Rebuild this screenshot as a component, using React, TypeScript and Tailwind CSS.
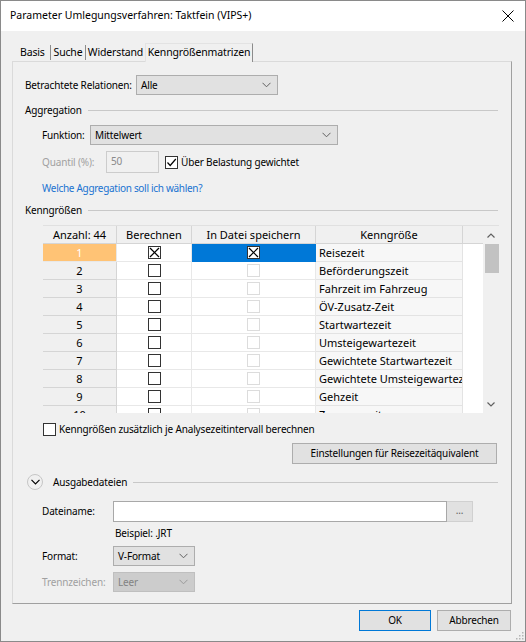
const font = { fontFamily: '"Noto Sans", "Liberation Sans", sans-serif' };

function Chevron({ color = "#606060" }: { color?: string }) {
  return (
    <svg width="9" height="6" viewBox="0 0 9 6">
      <polyline points="0.5,0.8 4.5,4.8 8.5,0.8" fill="none" stroke={color} strokeWidth="1" />
    </svg>
  );
}

function Select({ value, w, disabled }: { value: string; w: string; disabled?: boolean }) {
  return (
    <div
      className={`${w} h-[20px] shrink-0 flex items-center justify-between pl-[4px] pr-[6px] border ${
        disabled ? "bg-[#cccccc] border-[#bfbfbf] text-[#838383]" : "bg-[#e1e1e1] border-[#adadad] text-black"
      }`}
    >
      <span>{value}</span>
      <Chevron color={disabled ? "#9a9a9a" : "#606060"} />
    </div>
  );
}

function Box({ checked, disabled, tick }: { checked?: boolean; disabled?: boolean; tick?: boolean }) {
  return (
    <div
      className={`w-[13px] h-[13px] shrink-0 border bg-white flex items-center justify-center ${
        disabled ? "border-[#dcdcdc]" : "border-[#333333]"
      }`}
    >
      {checked && (
        <svg width="11" height="11" viewBox="0 0 11 11">
          <line x1="1" y1="1" x2="10" y2="10" stroke="#000" strokeWidth="1.2" />
          <line x1="10" y1="1" x2="1" y2="10" stroke="#000" strokeWidth="1.2" />
        </svg>
      )}
      {tick && (
        <svg width="11" height="11" viewBox="0 0 11 11">
          <polyline points="1.5,5.5 4.2,8.5 9.8,2" fill="none" stroke="#000" strokeWidth="1.2" />
        </svg>
      )}
    </div>
  );
}

function Group({ label }: { label: string }) {
  return (
    <div className="flex items-center h-[14px]">
      <span className="pr-[6px] whitespace-nowrap">{label}</span>
      <div className="flex-1 h-px bg-[#c8c8c8]" />
    </div>
  );
}

const rows = [
  "Reisezeit",
  "Beförderungszeit",
  "Fahrzeit im Fahrzeug",
  "ÖV-Zusatz-Zeit",
  "Startwartezeit",
  "Umsteigewartezeit",
  "Gewichtete Startwartezeit",
  "Gewichtete Umsteigewartezeit",
  "Gehzeit",
  "Zugangszeit",
];

function Table() {
  const cols = "grid grid-cols-[74px_75px_124px_147px_20px]";
  return (
    <div className="ml-[30px] mt-[8px] w-[456px] h-[188px] flex border-t border-[#e0e0e0] bg-white text-[11px] tracking-normal">
      <div className="w-[440px] flex flex-col">
        <div className={`${cols} h-[18px] bg-[#f0f0f0] text-center`}>
          <div className="border-r border-b border-[#d5d5d5] leading-[17px]">Anzahl: 44</div>
          <div className="border-r border-b border-[#d5d5d5] leading-[17px]">Berechnen</div>
          <div className="border-r border-b border-[#d5d5d5] leading-[17px]">In Datei speichern</div>
          <div className="border-r border-b border-[#d5d5d5] leading-[17px]">Kenngröße</div>
          <div className="border-b border-[#d5d5d5]" />
        </div>
        <div className="h-[170px] overflow-hidden">
          {rows.map((r, i) => (
            <div key={r} className={`${cols} h-[18px]`}>
              <div
                className={`border-r border-b leading-[17px] text-center ${
                  i === 0 ? "bg-[#ffc375] text-white border-[#e8e8e8]" : "bg-[#f0f0f0] border-[#d5d5d5]"
                }`}
              >
                {i + 1}
              </div>
              <div className="border-r border-b border-[#e8e8e8] flex items-center justify-center">
                <Box checked={i === 0} />
              </div>
              <div
                className={`border-r border-b flex items-center justify-center ${
                  i === 0 ? "bg-[#0078d7] border-[#0078d7]" : "border-[#e8e8e8]"
                }`}
              >
                <Box checked={i === 0} disabled={i !== 0} />
              </div>
              <div className="border-r border-b border-[#e3e3e3] bg-[#f7f7f7] pl-[3px] leading-[17px] whitespace-nowrap overflow-hidden">
                {r}
              </div>
              <div />
            </div>
          ))}
        </div>
      </div>
      <div className="w-[16px] bg-[#f0f0f0] flex flex-col items-center">
        <div className="h-[18px] flex items-center justify-center">
          <svg width="8" height="5" viewBox="0 0 8 5">
            <polyline points="0.5,4.5 4,1 7.5,4.5" fill="none" stroke="#606060" strokeWidth="1.2" />
          </svg>
        </div>
        <div className="w-[14px] h-[29px] bg-[#c2c2c2] ml-px" />
        <div className="flex-1" />
        <div className="h-[18px] flex items-center justify-center">
          <svg width="8" height="5" viewBox="0 0 8 5">
            <polyline points="0.5,0.5 4,4 7.5,0.5" fill="none" stroke="#606060" strokeWidth="1.2" />
          </svg>
        </div>
      </div>
    </div>
  );
}

export default function App() {
  return (
    <div
      style={font}
      className="w-[526px] h-[642px] border border-[#8a8a8a] bg-[#f0f0f0] text-[10px] tracking-[-0.15px] text-black flex flex-col overflow-hidden whitespace-nowrap"
    >
      <div className="h-[30px] bg-white flex items-center justify-between pl-[9px] pr-[11px] shrink-0">
        <span className="text-[10.5px] tracking-normal">Parameter Umlegungsverfahren: Taktfein (VIPS+)</span>
        <svg width="12" height="12" viewBox="0 0 12 12">
          <line x1="0.5" y1="0.5" x2="11.5" y2="11.5" stroke="#000" strokeWidth="1" />
          <line x1="11.5" y1="0.5" x2="0.5" y2="11.5" stroke="#000" strokeWidth="1" />
        </svg>
      </div>

      <div className="ml-[11px] mt-[11px] flex items-end h-[19px] shrink-0 text-[10.5px]">
        <div className="w-[38px] pl-[8px] leading-[17px]">Basis</div>
        <div className="w-px h-[15px] bg-[#8c8c8c] mb-[1px]" />
        <div className="w-[34px] leading-[17px] text-center">Suche</div>
        <div className="w-px h-[15px] bg-[#8c8c8c] mb-[1px]" />
        <div className="w-[59px] leading-[17px] text-center">Widerstand</div>
        <div className="w-[108px] h-[19px] border-l border-r border-t border-l-[#e3e3e3] border-t-[#e3e3e3] border-r-[#8c8c8c] leading-[17px] text-center bg-[#f0f0f0] relative top-px">
          Kenngrößenmatrizen
        </div>
      </div>

      <div className="ml-[11px] w-[500px] h-[543px] border border-l-[#dadada] border-t-[#dadada] border-r-[#a0a0a0] border-b-[#a0a0a0] flex flex-col shrink-0">
        <div className="mt-[13px] pl-[12px] flex items-center h-[20px]">
          <span className="w-[111px] shrink-0">Betrachtete Relationen:</span>
          <Select value="Alle" w="w-[142px]" />
        </div>

        <div className="mt-[8px] pl-[12px] pr-[13px]">
          <Group label="Aggregation" />
        </div>

        <div className="mt-[8px] pl-[29px] flex items-center h-[20px]">
          <span className="w-[48px] shrink-0">Funktion:</span>
          <Select value="Mittelwert" w="w-[248px]" />
        </div>

        <div className="mt-[6px] pl-[29px] flex items-center h-[22px]">
          <span className="w-[64px] shrink-0 text-[#a0a0a0]">Quantil (%):</span>
          <div className="w-[53px] h-[22px] shrink-0 border border-[#cccccc] pl-[4px] text-[#8a8a8a] leading-[18px]">50</div>
          <div className="ml-[6px] flex items-center gap-[3px]">
            <Box tick />
            <span>Über Belastung gewichtet</span>
          </div>
        </div>

        <div className="mt-[8px] pl-[29px] h-[14px] leading-[14px] text-[#1a73d0] tracking-[-0.3px]">
          Welche Aggregation soll ich wählen?
        </div>

        <div className="mt-[8px] pl-[12px] pr-[13px]">
          <Group label="Kenngrößen" />
        </div>

        <Table />

        <div className="mt-[9px] pl-[30px] flex items-center gap-[3px] h-[14px]">
          <Box />
          <span>Kenngrößen zusätzlich je Analysezeitintervall berechnen</span>
        </div>

        <div className="mt-[7px] pr-[14px] flex justify-end">
          <div className="w-[205px] h-[21px] bg-[#e1e1e1] border border-[#adadad] flex items-center justify-center">
            Einstellungen für Reisezeitäquivalent
          </div>
        </div>

        <div className="mt-[10px] pl-[14px] pr-[13px] flex items-center h-[16px]">
          <div className="w-[16px] h-[16px] shrink-0 rounded-full border border-[#c6c6c6] flex items-center justify-center mr-[10px]">
            <svg width="9" height="6" viewBox="0 0 9 6">
              <polyline points="0.5,0.8 4.5,4.8 8.5,0.8" fill="none" stroke="#000" strokeWidth="1.2" />
            </svg>
          </div>
          <div className="flex-1">
            <Group label="Ausgabedateien" />
          </div>
        </div>

        <div className="mt-[11px] pl-[29px] flex items-center h-[21px]">
          <span className="w-[71px] shrink-0">Dateiname:</span>
          <div className="w-[334px] h-[21px] shrink-0 bg-white border border-[#a8a8a8]" />
          <div className="w-[26px] h-[21px] shrink-0 bg-[#e1e1e1] border border-[#d0d0d0] border-l-0 flex items-center justify-center text-[#606060] leading-none pb-[3px]">
            ...
          </div>
        </div>

        <div className="mt-[4px] pl-[102px] h-[14px] leading-[14px]">Beispiel: .JRT</div>

        <div className="mt-[6px] pl-[29px] flex items-center h-[20px]">
          <span className="w-[71px] shrink-0">Format:</span>
          <Select value="V-Format" w="w-[82px]" />
        </div>

        <div className="mt-[6px] pl-[29px] flex items-center h-[20px]">
          <span className="w-[71px] shrink-0 text-[#a0a0a0]">Trennzeichen:</span>
          <Select value="Leer" w="w-[82px]" disabled />
        </div>
      </div>

      <div className="flex-1 flex items-start justify-end pr-[14px] pt-[6px] gap-[6px] relative">
        <div className="w-[72px] h-[21px] bg-[#e1e1e1] border border-[#0078d7] flex items-center justify-center">OK</div>
        <div className="w-[74px] h-[21px] bg-[#e1e1e1] border border-[#adadad] flex items-center justify-center">
          Abbrechen
        </div>
        <svg className="absolute right-[1px] bottom-[1px]" width="8" height="8" viewBox="0 0 8 8">
          <rect x="6" y="0" width="1.5" height="1.5" fill="#b5b5b5" />
          <rect x="3" y="3" width="1.5" height="1.5" fill="#b5b5b5" />
          <rect x="6" y="3" width="1.5" height="1.5" fill="#b5b5b5" />
          <rect x="0" y="6" width="1.5" height="1.5" fill="#b5b5b5" />
          <rect x="3" y="6" width="1.5" height="1.5" fill="#b5b5b5" />
          <rect x="6" y="6" width="1.5" height="1.5" fill="#b5b5b5" />
        </svg>
      </div>
    </div>
  );
}
